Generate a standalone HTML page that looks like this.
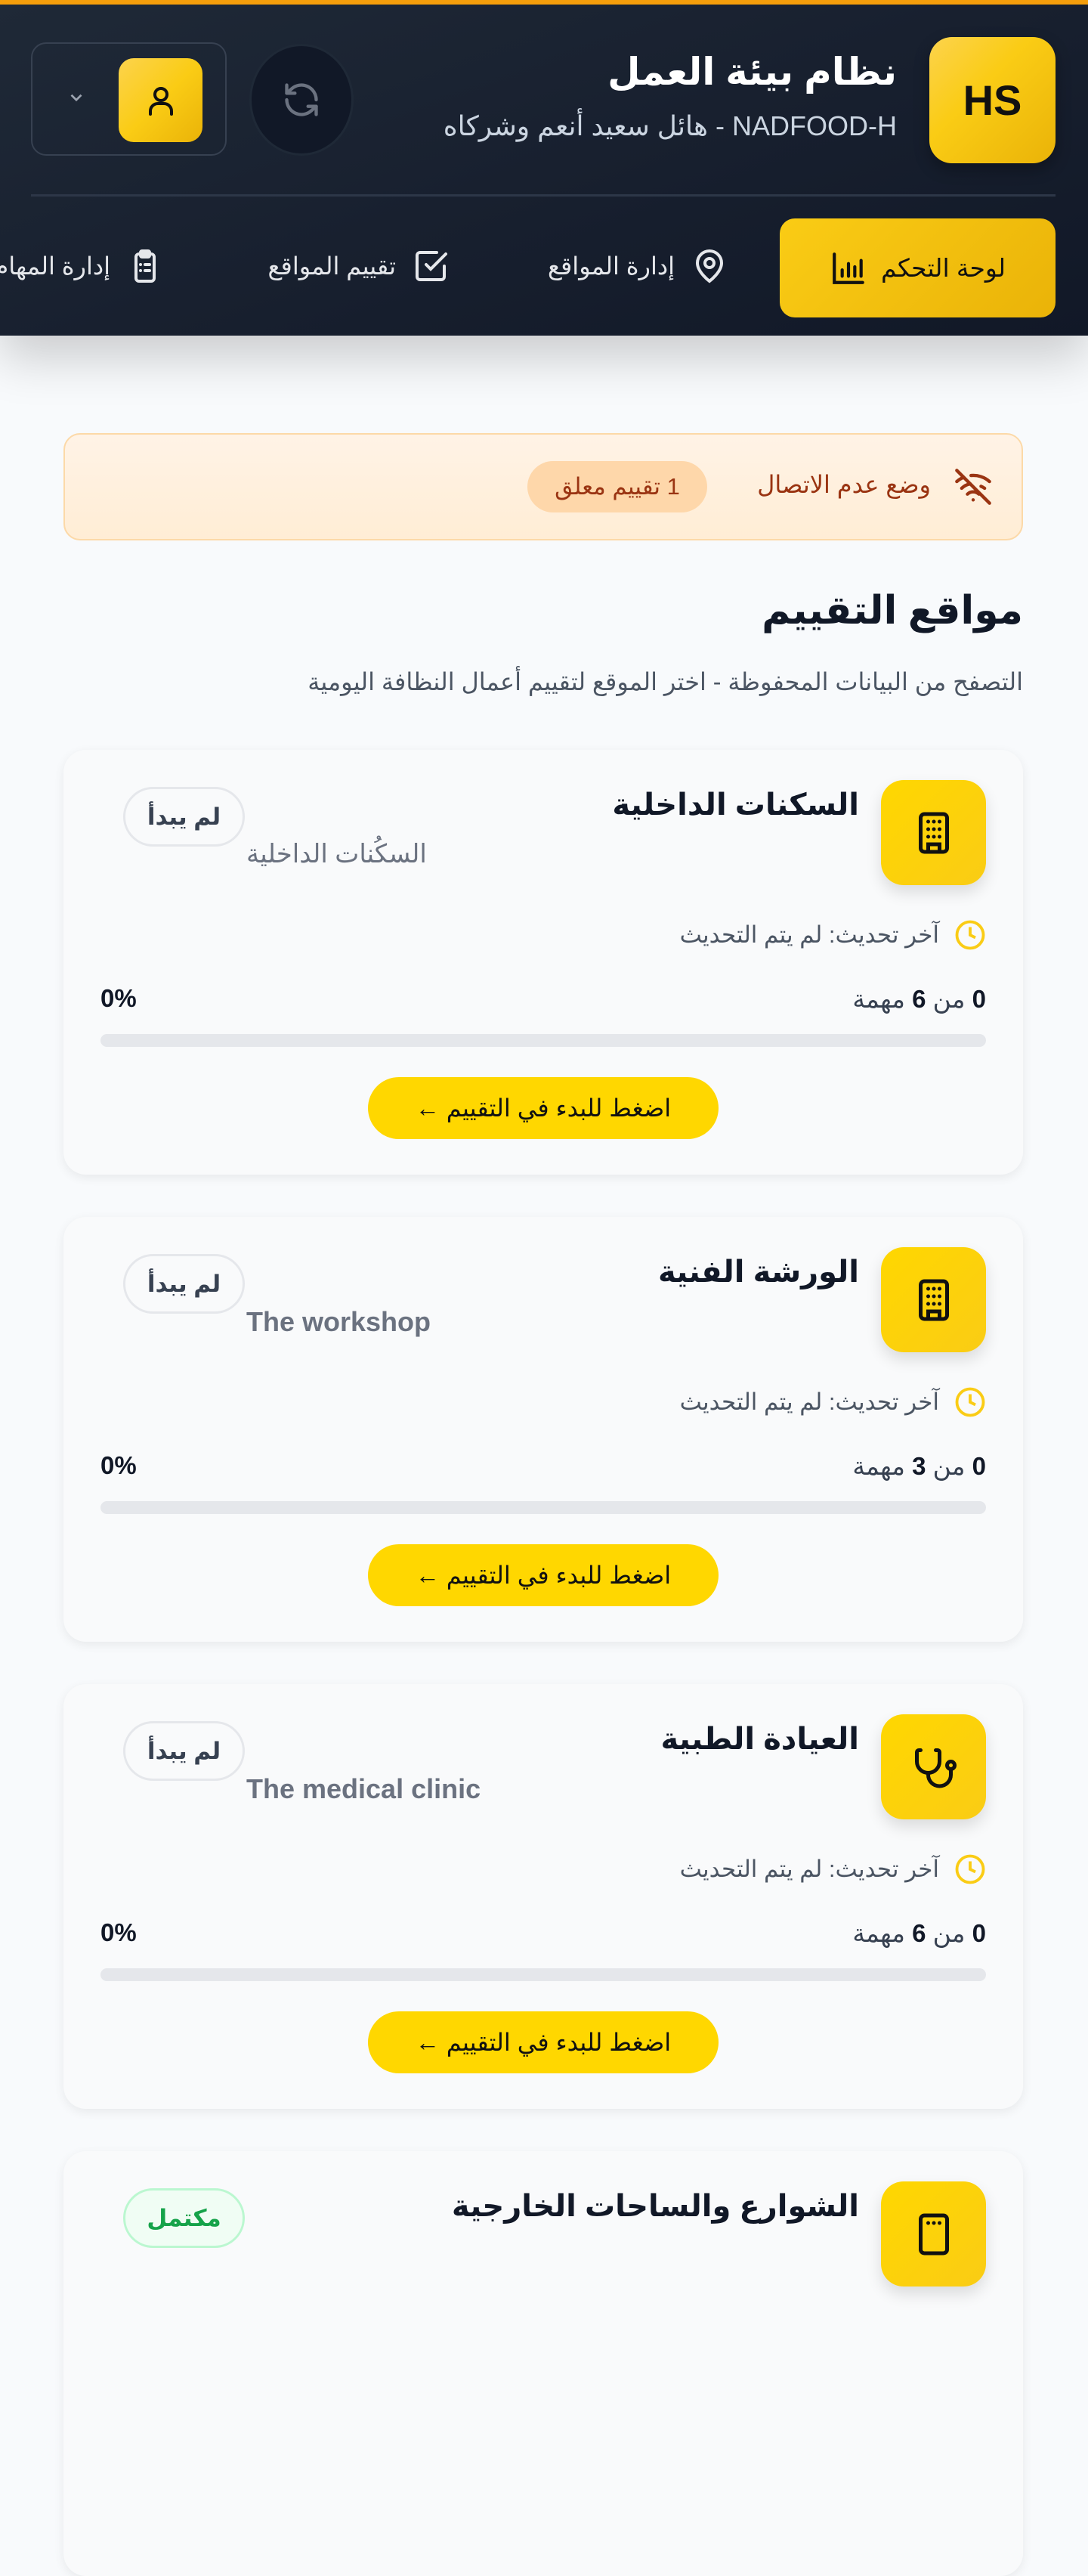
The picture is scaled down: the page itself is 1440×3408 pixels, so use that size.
<!DOCTYPE html>
<html lang="ar" dir="rtl"><head><meta charset="utf-8">
<style>
*{box-sizing:border-box;margin:0;padding:0}
body{width:1440px;height:2935px;overflow:hidden;background:#f8fafc;font-family:"Liberation Sans","DejaVu Sans",sans-serif;position:relative}
.hdr{position:absolute;left:0;top:0;width:1440px;height:444px;background:linear-gradient(160deg,#1f2937 0%,#18202f 50%,#111827 100%);border-top:6px solid #f59e0b;box-shadow:0 30px 60px rgba(0,0,0,.18);overflow:hidden}
.abs{position:absolute}
.hs{left:1230px;top:43px;width:167px;height:167px;border-radius:30px;background:linear-gradient(135deg,#fcd34d,#facc15 40%,#eab308);display:flex;align-items:center;justify-content:center;font-weight:bold;font-size:56px;color:#111;direction:ltr;box-shadow:0 8px 20px rgba(0,0,0,.3)}
.t1{right:253px;top:60px;font-size:50px;font-weight:bold;color:#fff;white-space:nowrap}
.t2{right:253px;top:140px;font-size:36px;color:#cbd5e1;white-space:nowrap}
.ref{left:330px;top:52px;width:138px;height:148px;border-radius:50%;background:#111827;border:3px solid #1f2937;display:flex;align-items:center;justify-content:center}
.usr{left:41px;top:50px;width:259px;height:150px;border:2px solid #374151;border-radius:20px}
.ub{left:157px;top:71px;width:111px;height:111px;border-radius:20px;background:linear-gradient(135deg,#fcd34d,#facc15,#eab308);display:flex;align-items:center;justify-content:center}
.div{left:41px;top:251px;width:1356px;height:3px;background:#2d3748}
.nav{left:1032px;top:283px;width:365px;height:131px;border-radius:20px;background:linear-gradient(135deg,#facc15,#eab308);display:flex;align-items:center;justify-content:center;gap:18px;font-size:33px;color:#111}
.ni{font-size:32px;color:#e5e7eb;white-space:nowrap;display:flex;align-items:center;gap:22px;top:322px}
.banner{left:84px;top:573px;width:1270px;height:142px;border:2px solid #fcd9a8;border-radius:22px;background:linear-gradient(180deg,#fff3e6,#ffedd5)}
.h1{right:86px;top:778px;font-size:52px;font-weight:bold;color:#111827}
.sub{right:86px;top:883px;font-size:32px;color:#4b5563;white-space:nowrap}
.card{position:absolute;left:84px;width:1270px;height:562px;border-radius:30px;background:#f9fafb;box-shadow:0 4px 14px rgba(0,0,0,.07)}
.ib{position:absolute;left:1082px;top:40px;width:139px;height:139px;border-radius:30px;background:linear-gradient(135deg,#ffd700,#facc15);box-shadow:0 10px 20px rgba(0,0,0,.12);display:flex;align-items:center;justify-content:center}
.ct{position:absolute;right:217px;top:50px;font-size:40px;font-weight:bold;color:#111827;white-space:nowrap}
.cs{position:absolute;left:242px;top:118px;font-size:34px;color:#6b7280;white-space:nowrap}
.cs.en{direction:ltr;font-weight:bold;font-size:36px}
.bd{position:absolute;left:79px;top:49px;width:161px;height:79px;border-radius:40px;border:3px solid #e5e7eb;background:#f9fafb;display:flex;align-items:center;justify-content:center;font-size:31px;font-weight:bold;color:#374151}
.bd.g{border-color:#bbf7d0;background:#f0fdf4;color:#16a34a}
.clk{position:absolute;right:49px;top:224px;display:flex;align-items:center;gap:20px;font-size:31px;color:#4b5563;white-space:nowrap}
.tk{position:absolute;right:49px;top:310px;font-size:33px;color:#374151;white-space:nowrap}
.tk b{color:#111827}
.pc{position:absolute;left:49px;top:310px;font-size:33px;font-weight:bold;color:#111827}
.bar{position:absolute;left:49px;right:49px;top:376px;height:17px;border-radius:9px;background:#e5e7eb}
.btn{position:absolute;left:403px;top:433px;width:464px;height:82px;border-radius:41px;background:#ffd700;display:flex;align-items:center;justify-content:center;font-size:32px;color:#111;white-space:nowrap}
</style></head><body>
<div class="hdr">
 <div class="abs hs">HS</div>
 <div class="abs t1">نظام بيئة العمل</div>
 <div class="abs t2">NADFOOD-H - هائل سعيد أنعم وشركاه</div>
 <div class="abs ref"><svg width="52" height="52" viewBox="0 0 24 24" fill="none" stroke="#6b7280" stroke-width="2" stroke-linecap="round" stroke-linejoin="round"><path d="M21 12a9 9 0 0 0-15-6.7L3 8"/><path d="M3 3v5h5"/><path d="M3 12a9 9 0 0 0 15 6.7l3-2.7"/><path d="M16 16h5v5"/></svg></div>
 <div class="abs usr"></div>
 <div class="abs" style="left:88px;top:110px"><svg width="26" height="26" viewBox="0 0 24 24" fill="none" stroke="#9ca3af" stroke-width="2.5"><path d="M6 9l6 6 6-6"/></svg></div>
 <div class="abs ub"><svg width="48" height="48" viewBox="0 0 24 24" fill="none" stroke="#111" stroke-width="2" stroke-linecap="round"><circle cx="12" cy="8" r="4"/><path d="M5 21v-2a5 5 0 0 1 5-5h4a5 5 0 0 1 5 5v2"/></svg></div>
 <div class="abs div"></div>
 <div class="abs nav"><span>لوحة التحكم</span><svg width="50" height="50" viewBox="0 0 24 24" fill="none" stroke="#111" stroke-width="2" stroke-linecap="round"><path d="M3 3v18h18"/><path d="M8 17v-4M12 17V9M16 17v-6M20 17V7"/></svg></div>
 <div class="abs ni" style="right:477px"><svg width="48" height="48" viewBox="0 0 24 24" fill="none" stroke="#e5e7eb" stroke-width="2"><path d="M20 10c0 6-8 12-8 12s-8-6-8-12a8 8 0 0 1 16 0z"/><circle cx="12" cy="10" r="3"/></svg><span>إدارة المواقع</span></div>
 <div class="abs ni" style="right:846px"><svg width="48" height="48" viewBox="0 0 24 24" fill="none" stroke="#e5e7eb" stroke-width="2" stroke-linecap="round"><path d="M9 11l3 3L22 4"/><path d="M21 12v7a2 2 0 0 1-2 2H5a2 2 0 0 1-2-2V5a2 2 0 0 1 2-2h11"/></svg><span>تقييم المواقع</span></div>
 <div class="abs ni" style="right:1224px"><svg width="48" height="48" viewBox="0 0 24 24" fill="none" stroke="#e5e7eb" stroke-width="2" stroke-linecap="round"><rect x="6" y="4" width="12" height="18" rx="2"/><rect x="9" y="2" width="6" height="4" rx="1"/><path d="M9 11h.01M12 11h3M9 15h.01M12 15h3"/></svg><span>إدارة المهام</span></div>
</div>

<div class="abs banner"></div>
<div class="abs" style="left:1262px;top:618px"><svg width="52" height="52" viewBox="0 0 24 24" fill="none" stroke="#9a3412" stroke-width="2" stroke-linecap="round"><path d="M2 2l20 20"/><path d="M8.5 16.5a5 5 0 0 1 7 0"/><path d="M2 8.8a15 15 0 0 1 4.2-2.6"/><path d="M10.7 5.1A15 15 0 0 1 22 8.8"/><path d="M5 12.9a10 10 0 0 1 5.2-2.7"/><path d="M16.8 11.7A10 10 0 0 1 19 12.9"/><path d="M12 20h.01"/></svg></div>
<div class="abs" style="right:208px;top:622px;font-size:32px;color:#9a3412;white-space:nowrap">وضع عدم الاتصال</div>
<div class="abs" style="left:698px;top:610px;width:238px;height:68px;border-radius:34px;background:#fed7aa;display:flex;align-items:center;justify-content:center;font-size:31px;color:#9a3412;white-space:nowrap">1 تقييم معلق</div>

<div class="abs h1">مواقع التقييم</div>
<div class="abs sub">التصفح من البيانات المحفوظة - اختر الموقع لتقييم أعمال النظافة اليومية</div>

<div class="card" style="top:992px">
 <div class="ib"><svg width="60" height="60" viewBox="0 0 24 24" fill="none" stroke="#111" stroke-width="2"><rect x="5" y="2" width="14" height="20" rx="2"/><path d="M9 22v-4h6v4" /><path d="M9 6h.01M12 6h.01M15 6h.01M9 10h.01M12 10h.01M15 10h.01M9 14h.01M12 14h.01M15 14h.01" stroke-linecap="round"/></svg></div>
 <div class="ct">السكنات الداخلية</div>
 <div class="cs">السكُنات الداخلية</div>
 <div class="bd">لم يبدأ</div>
 <div class="clk"><svg width="42" height="42" viewBox="0 0 24 24" fill="none" stroke="#facc15" stroke-width="2.2"><circle cx="12" cy="12" r="10"/><path d="M12 6v6l4 2"/></svg><span>آخر تحديث: لم يتم التحديث</span></div>
 <div class="tk"><b>0</b> من <b>6</b> مهمة</div>
 <div class="pc">0%</div>
 <div class="bar"></div>
 <div class="btn">اضغط للبدء في التقييم ←</div>
</div>

<div class="card" style="top:1610px">
 <div class="ib"><svg width="60" height="60" viewBox="0 0 24 24" fill="none" stroke="#111" stroke-width="2"><rect x="5" y="2" width="14" height="20" rx="2"/><path d="M9 22v-4h6v4" /><path d="M9 6h.01M12 6h.01M15 6h.01M9 10h.01M12 10h.01M15 10h.01M9 14h.01M12 14h.01M15 14h.01" stroke-linecap="round"/></svg></div>
 <div class="ct">الورشة الفنية</div>
 <div class="cs en">The workshop</div>
 <div class="bd">لم يبدأ</div>
 <div class="clk"><svg width="42" height="42" viewBox="0 0 24 24" fill="none" stroke="#facc15" stroke-width="2.2"><circle cx="12" cy="12" r="10"/><path d="M12 6v6l4 2"/></svg><span>آخر تحديث: لم يتم التحديث</span></div>
 <div class="tk"><b>0</b> من <b>3</b> مهمة</div>
 <div class="pc">0%</div>
 <div class="bar"></div>
 <div class="btn">اضغط للبدء في التقييم ←</div>
</div>

<div class="card" style="top:2228px">
 <div class="ib"><svg width="60" height="60" viewBox="0 0 24 24" fill="none" stroke="#111" stroke-width="2" stroke-linecap="round"><path d="M5 3H4a1 1 0 0 0-1 1v5a6 6 0 0 0 12 0V4a1 1 0 0 0-1-1h-1"/><path d="M9 15v1a6 6 0 0 0 12 0v-3"/><circle cx="21" cy="11" r="2"/></svg></div>
 <div class="ct">العيادة الطبية</div>
 <div class="cs en">The medical clinic</div>
 <div class="bd">لم يبدأ</div>
 <div class="clk"><svg width="42" height="42" viewBox="0 0 24 24" fill="none" stroke="#facc15" stroke-width="2.2"><circle cx="12" cy="12" r="10"/><path d="M12 6v6l4 2"/></svg><span>آخر تحديث: لم يتم التحديث</span></div>
 <div class="tk"><b>0</b> من <b>6</b> مهمة</div>
 <div class="pc">0%</div>
 <div class="bar"></div>
 <div class="btn">اضغط للبدء في التقييم ←</div>
</div>

<div class="card" style="top:2846px">
 <div class="ib" style="top:40px"><svg width="60" height="60" viewBox="0 0 24 24" fill="none" stroke="#111" stroke-width="2"><rect x="5" y="2" width="14" height="20" rx="2"/><path d="M9 6h.01M12 6h.01M15 6h.01" stroke-linecap="round"/></svg></div>
 <div class="ct">الشوارع والساحات الخارجية</div>
 <div class="bd g">مكتمل</div>
</div>
</body></html>
